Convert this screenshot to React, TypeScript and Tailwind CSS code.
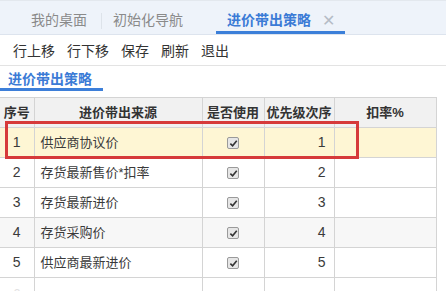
const rows = [
  { no: "1", name: "供应商协议价", order: "1", bg: "bg-[#fef6d4]" },
  { no: "2", name: "存货最新售价*扣率", order: "2", bg: "bg-white" },
  { no: "3", name: "存货最新进价", order: "3", bg: "bg-white" },
  { no: "4", name: "存货采购价", order: "4", bg: "bg-[#f7f7f7]" },
  { no: "5", name: "供应商最新进价", order: "5", bg: "bg-white" },
]

function Check() {
  return (
    <span className="inline-flex h-[12px] w-[12px] items-center justify-center rounded-[2px] border border-[#9a9a9a] bg-[#e6e6e6] align-middle">
      <svg width="9" height="9" viewBox="0 0 10 10">
        <path d="M1.5 5.2 L4 7.6 L8.6 2" fill="none" stroke="#333" strokeWidth="1.8" />
      </svg>
    </span>
  )
}

export default function App() {
  return (
    <div className="relative h-[291px] w-[446px] overflow-hidden bg-white text-[14px] text-[#333] font-['Liberation_Sans','Noto_Sans_CJK_SC',sans-serif]">
      {/* top tabs */}
      <div className="flex h-[35px] border-t border-[#e3e8ee] border-b border-b-[#dde4ee] bg-[#eef3fa] pl-[17px]">
        <div className="flex h-full w-[84px] items-center justify-center border-b-[3px] border-transparent pt-[9px] text-[#8a8a8a]">
          我的桌面
        </div>
        <div className="mt-[12px] h-[16px] w-px bg-[#dde3ea]" />
        <div className="flex h-full w-[92px] items-center justify-center border-b-[3px] border-transparent pt-[9px] text-[#8a8a8a]">
          初始化导航
        </div>
        <div className="ml-[22px] flex h-full w-[129px] items-center border-b-[3px] border-[#3b7fd9] pl-[11px] pt-[9px]">
          <span className="font-bold text-[#3b7bd6]">进价带出策略</span>
          <span className="ml-[11px] text-[16px] leading-none text-[#b5bcc6]">✕</span>
        </div>
      </div>

      {/* toolbar */}
      <div className="flex h-[31px] items-center gap-3 border-b border-[#e3e3e3] pl-[13px] pt-[2px]">
        <span>行上移</span>
        <span>行下移</span>
        <span>保存</span>
        <span>刷新</span>
        <span>退出</span>
      </div>

      {/* sub tab */}
      <div className="mb-[6px] flex h-[25px] w-[103px] items-center border-b-[3px] border-[#3d7fd9] pl-[8px] pt-[4px] font-bold text-[#3b7bd6]">
        进价带出策略
      </div>

      {/* grid */}
      <table className="w-[436px] table-fixed border-collapse text-[13px] text-[#3a3a3a]">
        <colgroup>
          <col className="w-[34px]" />
          <col className="w-[168px]" />
          <col className="w-[62px]" />
          <col className="w-[70px]" />
          <col className="w-[102px]" />
        </colgroup>
        <thead>
          <tr className="h-[30px] whitespace-nowrap bg-[#f1f1f1] font-bold text-[#333]">
            <th className="border border-l-0 border-[#d4d4d4] p-0 text-center">序号</th>
            <th className="border border-[#d4d4d4] p-0 text-center">进价带出来源</th>
            <th className="border border-[#d4d4d4] p-0 text-center">是否使用</th>
            <th className="border border-[#d4d4d4] p-0 text-center">优先级次序</th>
            <th className="border border-[#d4d4d4] p-0 text-center">扣率%</th>
          </tr>
        </thead>
        <tbody>
          {rows.map(r => (
            <tr key={r.no} className={`h-[30px] ${r.bg}`}>
              <td className="border border-l-0 border-[#d4d4d4] p-0 text-center text-[14px]">{r.no}</td>
              <td className="border border-[#d4d4d4] px-[6px] py-0">{r.name}</td>
              <td className="border border-[#d4d4d4] p-0 text-center">
                <Check />
              </td>
              <td className="border border-[#d4d4d4] py-0 pr-[8px] text-right text-[14px]">{r.order}</td>
              <td className="border border-[#d4d4d4] p-0" />
            </tr>
          ))}
          <tr className="h-[30px] bg-white">
            <td className="border border-l-0 border-[#d4d4d4] p-0 pt-[6px] text-center align-top text-[#e2e2e2]">6</td>
            <td className="border border-[#d4d4d4] p-0" />
            <td className="border border-[#d4d4d4] p-0" />
            <td className="border border-[#d4d4d4] p-0" />
            <td className="border border-[#d4d4d4] p-0" />
          </tr>
        </tbody>
      </table>

      {/* annotation */}
      <div className="absolute left-[5px] top-[121px] h-[38px] w-[354px] border-[3px] border-[#d63a3a]" />
    </div>
  )
}
